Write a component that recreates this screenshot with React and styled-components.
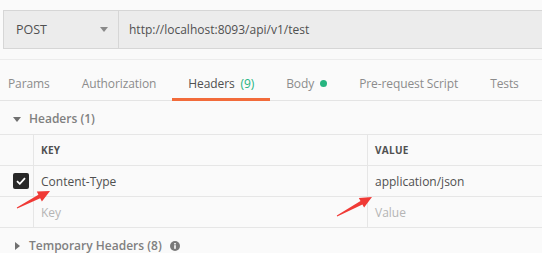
import React from "react";
import styled, { createGlobalStyle } from "styled-components";

const GlobalStyle = createGlobalStyle`
  body {
    margin: 0;
    background: #fafafa;
    font-family: "Open Sans", "Noto Sans", sans-serif;
  }
`;

const Page = styled.div`
  position: relative;
  width: 542px;
  height: 253px;
  overflow: hidden;
  background: #fafafa;
  color: #505050;
`;

const RequestBar = styled.div`
  display: flex;
  height: 37px;
  margin: 10px -20px 0 3px;
  border: 1px solid #d6d6d6;
  background: #ececec;
`;

const Method = styled.div`
  display: flex;
  align-items: center;
  justify-content: space-between;
  width: 115px;
  box-sizing: border-box;
  padding: 0 10px 0 12px;
  border-right: 1px solid #d6d6d6;
  font-size: 12.5px;
  color: #505050;
`;

const Caret = styled.span`
  width: 0;
  height: 0;
  border-left: 4px solid transparent;
  border-right: 4px solid transparent;
  border-top: 5px solid #8a8a8a;
`;

const Url = styled.div`
  display: flex;
  align-items: center;
  padding-left: 10px;
  font-size: 12px;
  color: #505050;
  white-space: nowrap;
`;

const TabBar = styled.div`
  display: flex;
  height: 40px;
  margin: 10px 0 0 -8px;
  border-top: 1px solid #ececec;
  border-bottom: 1px solid #e4e4e4;
`;

const Tab = styled.div`
  position: relative;
  flex-shrink: 0;
  display: flex;
  align-items: center;
  gap: 6px;
  padding: 7px 16px 0;
  font-size: 12px;
  letter-spacing: -0.1px;
  white-space: nowrap;
  color: ${(p) => (p.$active ? "#505050" : "#8c8c8c")};
  &::after {
    content: "";
    display: ${(p) => (p.$active ? "block" : "none")};
    position: absolute;
    left: 0;
    right: 0;
    bottom: -1px;
    height: 3px;
    background: #f26b3a;
  }
`;

const Count = styled.span`
  color: #26b47f;
`;

const Dot = styled.span`
  width: 7px;
  height: 7px;
  border-radius: 50%;
  background: #26b47f;
`;

const Section = styled.div`
  display: flex;
  align-items: center;
  gap: 8px;
  height: ${(p) => p.$height}px;
  box-sizing: border-box;
  padding: ${(p) => p.$top}px 0 0 13px;
  font-size: 12px;
  line-height: 14px;
  font-weight: 600;
  color: #808080;
`;

const Triangle = styled.span`
  width: 0;
  height: 0;
  ${(p) =>
    p.$open
      ? `border-left: 4px solid transparent;
         border-right: 4px solid transparent;
         border-top: 5px solid #707070;`
      : `border-top: 4px solid transparent;
         border-bottom: 4px solid transparent;
         border-left: 5px solid #707070;
         margin: 0 1px 0 2px;`}
`;

const Table = styled.div`
  display: grid;
  grid-template-columns: 33px 334px 1fr;
  border-top: 1px solid #e6e6e6;
`;

const Cell = styled.div`
  display: flex;
  align-items: center;
  height: 30px;
  padding-left: ${(p) => (p.$check ? 13 : 7)}px;
  border-bottom: 1px solid #e6e6e6;
  border-left: ${(p) => (p.$check ? "none" : "1px solid #e6e6e6")};
  font-size: 12px;
  color: ${(p) => (p.$placeholder ? "#b5b5b5" : "#505050")};
`;

const HeadCell = styled(Cell)`
  font-size: 10px;
  font-weight: 700;
  letter-spacing: 0.3px;
  color: #505050;
`;

const Checkbox = styled.span`
  display: flex;
  align-items: center;
  justify-content: center;
  width: 16px;
  height: 16px;
  border-radius: 2px;
  background: #282828;
`;

const Overlay = styled.svg`
  position: absolute;
  left: 0;
  top: 0;
  pointer-events: none;
`;

function arrowPoints([tx, ty], [px, py]) {
  const dx = px - tx;
  const dy = py - ty;
  const len = Math.hypot(dx, dy);
  const ux = dx / len;
  const uy = dy / len;
  const nx = -uy;
  const ny = ux;
  const bx = px - 12 * ux;
  const by = py - 12 * uy;
  const pts = [
    [tx + 0.5 * nx, ty + 0.5 * ny],
    [bx + 2 * nx, by + 2 * ny],
    [bx + 5.5 * nx, by + 5.5 * ny],
    [px, py],
    [bx - 5.5 * nx, by - 5.5 * ny],
    [bx - 2 * nx, by - 2 * ny],
    [tx - 0.5 * nx, ty - 0.5 * ny],
  ];
  return pts.map((p) => p.map((v) => v.toFixed(1)).join(",")).join(" ");
}

const tabs = [
  { label: "Params" },
  { label: "Authorization" },
  { label: "Headers", count: "(9)", active: true },
  { label: "Body", dot: true },
  { label: "Pre-request Script" },
  { label: "Tests" },
];

export default function App() {
  return (
    <Page>
      <GlobalStyle />
      <RequestBar>
        <Method>
          POST
          <Caret />
        </Method>
        <Url>http://localhost:8093/api/v1/test</Url>
      </RequestBar>

      <TabBar>
        {tabs.map((t) => (
          <Tab key={t.label} $active={t.active}>
            {t.label}
            {t.count && <Count>{t.count}</Count>}
            {t.dot && <Dot />}
          </Tab>
        ))}
      </TabBar>

      <Section $height={33} $top={3}>
        <Triangle $open />
        Headers (1)
      </Section>

      <Table>
        <HeadCell $check />
        <HeadCell>KEY</HeadCell>
        <HeadCell>VALUE</HeadCell>

        <Cell $check>
          <Checkbox>
            <svg width="10" height="8" viewBox="0 0 10 8">
              <path d="M1 4.2 L3.8 6.8 L9 1.2" fill="none" stroke="#fff" strokeWidth="1.8" />
            </svg>
          </Checkbox>
        </Cell>
        <Cell>Content-Type</Cell>
        <Cell>application/json</Cell>

        <Cell $check />
        <Cell $placeholder>Key</Cell>
        <Cell $placeholder>Value</Cell>
      </Table>

      <Section $height={26} $top={10}>
        <Triangle />
        Temporary Headers (8)
        <svg width="10" height="10" viewBox="0 0 10 10">
          <circle cx="5" cy="5" r="5" fill="#7a7a7a" />
          <rect x="4.2" y="4.2" width="1.6" height="3.6" fill="#fff" />
          <rect x="4.2" y="2" width="1.6" height="1.5" fill="#fff" />
        </svg>
      </Section>

      <Overlay width="542" height="253">
        <polygon points={arrowPoints([17, 208], [50, 191])} fill="#f03a36" />
        <polygon points={arrowPoints([337, 216], [372, 197])} fill="#f03a36" />
      </Overlay>
    </Page>
  );
}
